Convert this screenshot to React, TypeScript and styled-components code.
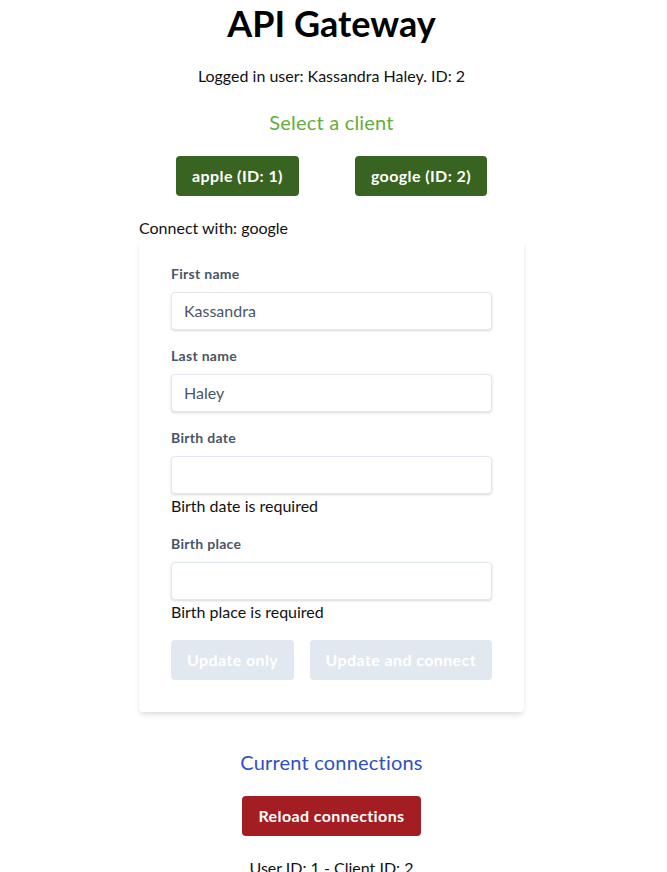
import React from "react";
import styled, { createGlobalStyle } from "styled-components";

const GlobalStyle = createGlobalStyle`
  *, *::before, *::after { box-sizing: border-box; }
  body {
    margin: 0;
    font-family: Lato, "Noto Sans", sans-serif;
    font-size: 16px;
    color: #111;
    background: #fff;
  }
`;

const Page = styled.main`
  display: flex;
  flex-direction: column;
  align-items: center;
  text-align: center;
  width: 663px;
`;

const Title = styled.h1`
  margin: 3px 0 0;
  font-size: 36px;
  line-height: 40px;
  font-weight: 700;
  color: #000;
`;

const Text = styled.p<{ $mt?: number }>`
  margin: ${(p) => p.$mt ?? 20}px 0 0;
  font-size: 16px;
  line-height: 24px;
  color: #111;
`;

const Heading = styled.h2<{ $color: string; $mt?: number }>`
  margin: ${(p) => p.$mt ?? 20}px 0 0;
  font-size: 20px;
  line-height: 28px;
  font-weight: 400;
  letter-spacing: 0.2px;
  color: ${(p) => p.$color};
`;

const ButtonRow = styled.div`
  display: flex;
  justify-content: center;
  margin-top: 20px;
`;

const Button = styled.button<{ $bg: string; $mx?: number }>`
  font-family: inherit;
  font-size: 16px;
  line-height: 24px;
  font-weight: 700;
  letter-spacing: 0.4px;
  color: #fff;
  background: ${(p) => p.$bg};
  border: none;
  border-radius: 4px;
  padding: 8px 16px;
  margin: 0 ${(p) => p.$mx ?? 0}px;
  cursor: pointer;
  &:disabled {
    cursor: default;
  }
`;

const Section = styled.section`
  width: 385px;
  margin-top: 20px;
  text-align: left;
`;

const Card = styled.form`
  background: #fff;
  border-radius: 4px;
  box-shadow: 0 4px 6px -1px rgba(0, 0, 0, 0.1), 0 2px 4px -1px rgba(0, 0, 0, 0.06);
  padding: 24px 32px 32px;
  display: flex;
  flex-direction: column;
`;

const Field = styled.div`
  display: flex;
  flex-direction: column;
  margin-bottom: 16px;
`;

const Label = styled.label`
  font-size: 14px;
  line-height: 20px;
  font-weight: 700;
  letter-spacing: 0.3px;
  color: #4a5568;
  margin-bottom: 8px;
`;

const Input = styled.input`
  font-family: inherit;
  font-size: 16px;
  line-height: 20px;
  color: #4a5568;
  width: 100%;
  border: 1px solid #e2e8f0;
  border-radius: 4px;
  padding: 8px 12px;
  box-shadow: 0 1px 3px 0 rgba(0, 0, 0, 0.1), 0 1px 2px 0 rgba(0, 0, 0, 0.06);
  outline: none;
`;

const ErrorText = styled.span`
  font-size: 16px;
  line-height: 24px;
  color: #111;
`;

const Actions = styled.div`
  display: flex;
  justify-content: space-between;
`;

export default function App() {
  return (
    <>
      <GlobalStyle />
      <Page>
        <Title>API Gateway</Title>
        <Text $mt={21}>Logged in user: Kassandra Haley. ID: 2</Text>
        <Heading $color="#63ad3c">Select a client</Heading>
        <ButtonRow>
          <Button $bg="#396321" $mx={28}>apple (ID: 1)</Button>
          <Button $bg="#396321" $mx={28}>google (ID: 2)</Button>
        </ButtonRow>
        <Section>
          <Text $mt={0}>Connect with: google</Text>
          <Card onSubmit={(e) => e.preventDefault()}>
            <Field>
              <Label>First name</Label>
              <Input defaultValue="Kassandra" />
            </Field>
            <Field>
              <Label>Last name</Label>
              <Input defaultValue="Haley" />
            </Field>
            <Field>
              <Label>Birth date</Label>
              <Input />
              <ErrorText>Birth date is required</ErrorText>
            </Field>
            <Field>
              <Label>Birth place</Label>
              <Input />
              <ErrorText>Birth place is required</ErrorText>
            </Field>
            <Actions>
              <Button $bg="#e2e8f0" disabled>Update only</Button>
              <Button $bg="#e2e8f0" disabled>Update and connect</Button>
            </Actions>
          </Card>
        </Section>
        <Heading $color="#2f4fc2" $mt={36}>Current connections</Heading>
        <ButtonRow>
          <Button $bg="#a31d23">Reload connections</Button>
        </ButtonRow>
        <Text>User ID: 1 - Client ID: 2</Text>
      </Page>
    </>
  );
}
